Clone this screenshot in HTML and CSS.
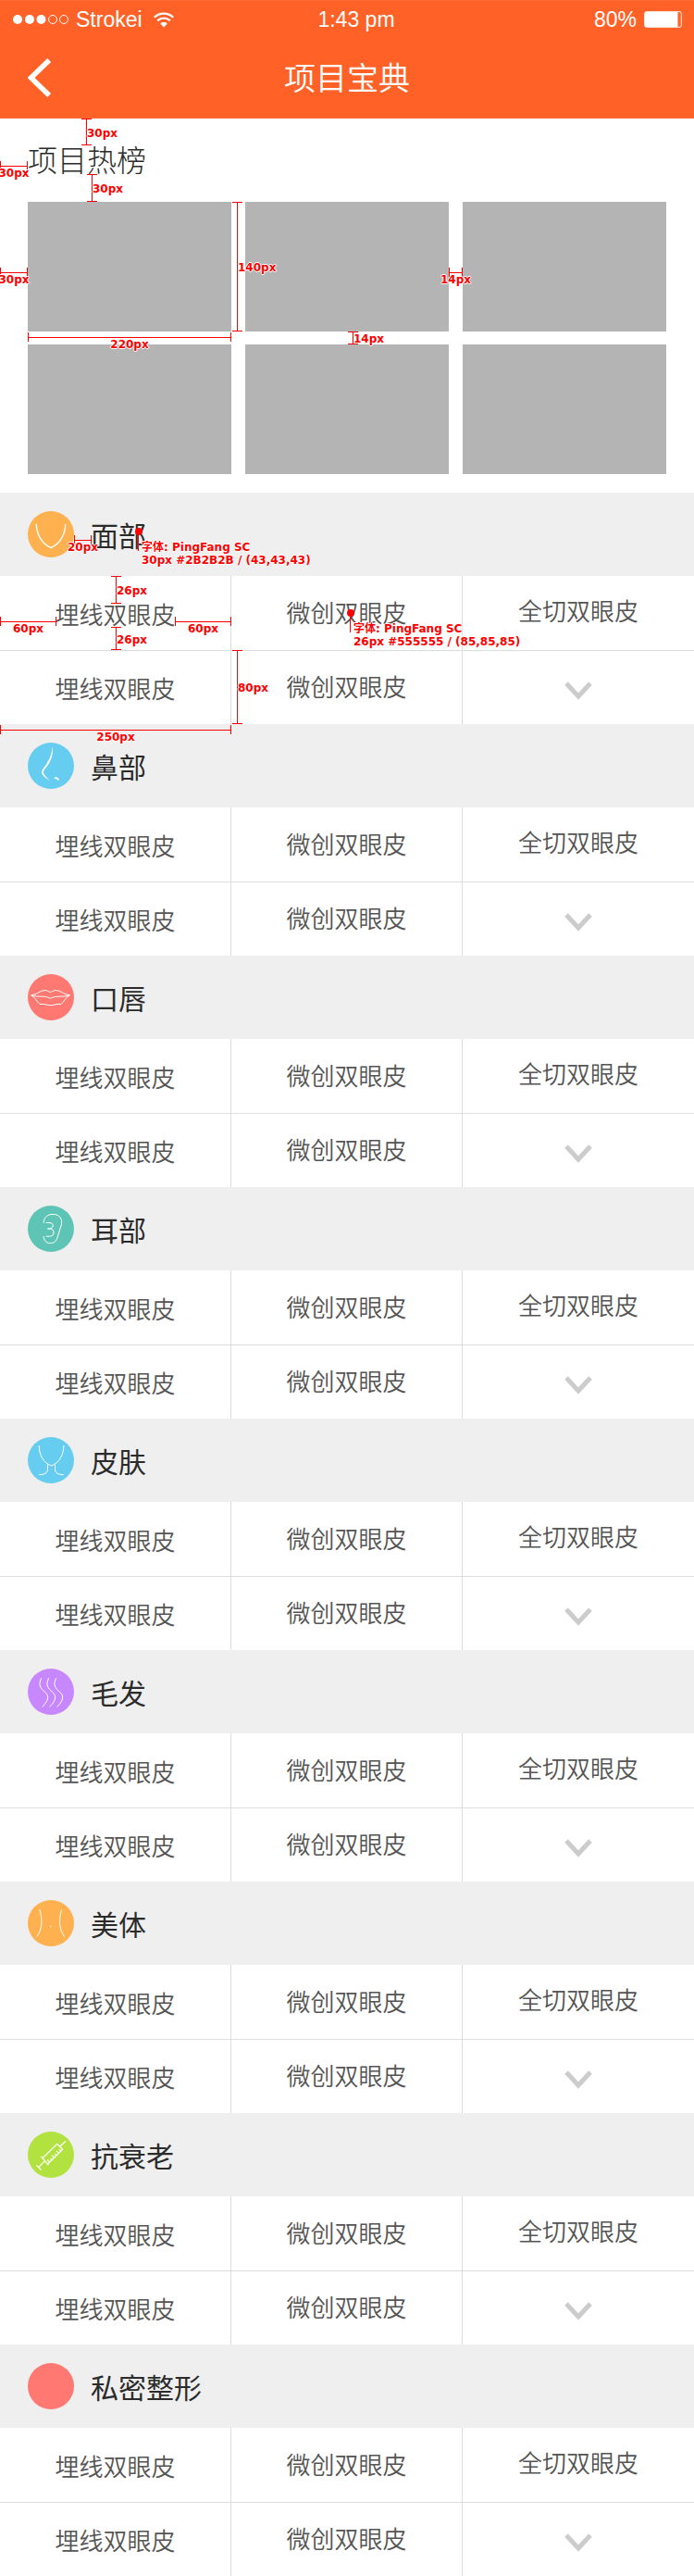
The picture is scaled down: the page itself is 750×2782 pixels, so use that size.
FILE: index.html
```html
<!DOCTYPE html>
<html lang="zh-CN">
<head>
<meta charset="utf-8">
<meta name="viewport" content="width=device-width, initial-scale=1">
<title>项目宝典</title>
<link rel="stylesheet" href="styles.css">
</head>
<body>
<header class="top">
  <div class="status">
    <div class="carrier">
      <svg class="signal" width="60" height="12" viewBox="0 0 60 12" aria-hidden="true"><g fill="#fff"><circle cx="5" cy="6" r="5"/><circle cx="18" cy="6" r="5"/><circle cx="30.500" cy="6" r="5"/></g><g fill="none" stroke="#fff"><circle cx="43" cy="6" r="4.500"/><circle cx="55" cy="6" r="4.500"/></g></svg>
      <span>Strokei</span>
      <svg class="wifi" width="22" height="17" viewBox="0 0 22 17" aria-hidden="true"><g fill="none" stroke="#fff" stroke-width="2.200"><path d="M.8 5.800C6.500.3 15.500.3 21.200 5.800"/><path d="M4.200 9.400C8 5.700 14 5.700 17.800 9.400"/></g><path d="M7.200 12.400C9.200 10.500 12.800 10.500 14.800 12.400L11 16.500Z" fill="#fff"/></svg>
    </div>
    <span class="clock">1:43 pm</span>
    <div class="power">
      <span>80%</span>
      <svg width="42" height="18" viewBox="0 0 42 18" aria-hidden="true"><rect x=".7" y=".7" width="39.600" height="16.600" rx="2" fill="none" stroke="#fff"/><rect x="1" y="1" width="35.500" height="16" rx="1" fill="#fff"/></svg>
    </div>
  </div>
  <div class="nav">
    <button class="back" type="button" aria-label="返回"><svg width="26" height="42" viewBox="0 0 26 42" aria-hidden="true"><path d="M23.200 2L3.500 21L23.200 40" fill="none" stroke="#fff" stroke-width="5.600"/></svg></button>
    <h1 class="title">项目宝典</h1>
  </div>
</header>
<main>
  <section class="hot">
    <h2 class="hot-title">项目热榜</h2>
    <div class="thumbs">
      <a class="thumb" href="#" aria-label="项目 1"></a><a class="thumb" href="#" aria-label="项目 2"></a><a class="thumb" href="#" aria-label="项目 3"></a>
      <a class="thumb" href="#" aria-label="项目 4"></a><a class="thumb" href="#" aria-label="项目 5"></a><a class="thumb" href="#" aria-label="项目 6"></a>
    </div>
    <span class="dim dim-v title-above"><b>30px</b></span>
    <span class="dim dim-h title-left"><b>30px</b></span>
    <span class="dim dim-v title-below"><b>30px</b></span>
    <span class="dim dim-h thumb-left"><b>30px</b></span>
    <span class="dim dim-v thumb-height"><b>140px</b></span>
    <span class="dim dim-h thumb-width"><b>220px</b></span>
    <span class="dim dim-v thumb-row"><b>14px</b></span>
    <span class="dim dim-h thumb-col"><b>14px</b></span>
  </section>

  <section class="group">
    <h2 class="group-head"><svg class="icon orange" viewBox="0 0 50 50" aria-hidden="true"><path stroke-width="1.400" d="M9.300 14C9.500 26 16 36 25 39.500C34 36 40.500 26 40.700 14"/></svg>面部</h2>
    <div class="items"><a href="#">埋线双眼皮</a><a href="#">微创双眼皮</a><a href="#">全切双眼皮</a><a href="#">埋线双眼皮</a><a href="#">微创双眼皮</a><button type="button" aria-label="展开"><svg class="chevron" viewBox="0 0 30 20" aria-hidden="true"><path d="M2 2L15 16L28 2"/></svg></button></div>
    <span class="dim dim-h icon-gap"><b>20px</b></span>
    <span class="dim dim-v item-above"><b>26px</b></span>
    <span class="dim dim-h item-left"><b>60px</b></span>
    <span class="dim dim-h item-right"><b>60px</b></span>
    <span class="dim dim-v item-below"><b>26px</b></span>
    <span class="dim dim-v item-height"><b>80px</b></span>
    <span class="dim dim-h item-width"><b>250px</b></span>
    <span class="note head-font">字体: PingFang SC<br>30px #2B2B2B / (43,43,43)</span>
    <span class="note item-font">字体: PingFang SC<br>26px #555555 / (85,85,85)</span>
  </section>

  <section class="group">
    <h2 class="group-head"><svg class="icon blue" viewBox="0 0 50 50" aria-hidden="true"><path fill="#fff" stroke="none" d="M26.400 4C27.800 11 26 18 22 24C19 28 16.500 30 17 33C18.500 36 21 38 24 41C20 39 16.500 36 15 33C14.500 30 17.500 27 20 23.500C24 17 26.200 12 26.400 4Z"/><path fill="#fff" stroke="none" d="M28 38.500C30 36.500 33.500 37 34 41C32 40.500 31 38.500 28 38.500Z"/></svg>鼻部</h2>
    <div class="items"><a href="#">埋线双眼皮</a><a href="#">微创双眼皮</a><a href="#">全切双眼皮</a><a href="#">埋线双眼皮</a><a href="#">微创双眼皮</a><button type="button" aria-label="展开"><svg class="chevron" viewBox="0 0 30 20" aria-hidden="true"><path d="M2 2L15 16L28 2"/></svg></button></div>
  </section>

  <section class="group">
    <h2 class="group-head"><svg class="icon red" viewBox="0 0 50 50" aria-hidden="true"><path d="M3.500 22.700C10 22.500 13 17.500 18.500 17.500C21 17.300 23 19.500 24.500 19.500C26 19.500 28 17.300 30.500 17.500C36 17.500 39 22.500 45.500 22.700C41 25 39 30 36 32.500C32 31.500 28 34 24.500 33.600C21 34 17 31.500 13 32.500C10 30 8 25 3.500 22.700Z"/><path d="M4 23C12 25.500 18 22.500 24.500 26.300C31 22.500 37 25.500 45 23"/></svg>口唇</h2>
    <div class="items"><a href="#">埋线双眼皮</a><a href="#">微创双眼皮</a><a href="#">全切双眼皮</a><a href="#">埋线双眼皮</a><a href="#">微创双眼皮</a><button type="button" aria-label="展开"><svg class="chevron" viewBox="0 0 30 20" aria-hidden="true"><path d="M2 2L15 16L28 2"/></svg></button></div>
  </section>

  <section class="group">
    <h2 class="group-head"><svg class="icon teal" viewBox="0 0 50 50" aria-hidden="true"><path d="M17.300 18.700C17 12.500 21.500 9.400 27 9.400C34 9.400 37.500 14 36.500 20L32.500 33C31 39 28 40.600 24.500 40.600C19.500 40.600 17 37 17.200 33"/><path d="M19.700 18.500H23C26 18.500 27.500 20 27.300 22C27 24.500 24 25 21.500 25H24C27 25 28 27 28 29C28 32 26 33.200 23.500 33.200H19.700"/></svg>耳部</h2>
    <div class="items"><a href="#">埋线双眼皮</a><a href="#">微创双眼皮</a><a href="#">全切双眼皮</a><a href="#">埋线双眼皮</a><a href="#">微创双眼皮</a><button type="button" aria-label="展开"><svg class="chevron" viewBox="0 0 30 20" aria-hidden="true"><path d="M2 2L15 16L28 2"/></svg></button></div>
  </section>

  <section class="group">
    <h2 class="group-head"><svg class="icon blue" viewBox="0 0 50 50" aria-hidden="true"><path d="M12.200 9C12 19 17 28 25.500 31C34 28 39 19 38.800 9"/><path d="M21.500 29.500V34.500C21.500 39 18 40.500 12.200 40.700M29.500 29.500V34.500C29.500 39 33 40.500 38.800 40.700"/></svg>皮肤</h2>
    <div class="items"><a href="#">埋线双眼皮</a><a href="#">微创双眼皮</a><a href="#">全切双眼皮</a><a href="#">埋线双眼皮</a><a href="#">微创双眼皮</a><button type="button" aria-label="展开"><svg class="chevron" viewBox="0 0 30 20" aria-hidden="true"><path d="M2 2L15 16L28 2"/></svg></button></div>
  </section>

  <section class="group">
    <h2 class="group-head"><svg class="icon purple" viewBox="0 0 50 50" aria-hidden="true"><path d="M14.500 10.300C9 23 20 23 21.700 30C22 34 19 38 15.700 41.300M22.500 10.300C17 23 28 23 29.700 30C30 34 27 38 23.700 41.300M30.500 10.300C25 23 36 23 37.700 30C38 34 35 38 31.700 41.300"/></svg>毛发</h2>
    <div class="items"><a href="#">埋线双眼皮</a><a href="#">微创双眼皮</a><a href="#">全切双眼皮</a><a href="#">埋线双眼皮</a><a href="#">微创双眼皮</a><button type="button" aria-label="展开"><svg class="chevron" viewBox="0 0 30 20" aria-hidden="true"><path d="M2 2L15 16L28 2"/></svg></button></div>
  </section>

  <section class="group">
    <h2 class="group-head"><svg class="icon orange" viewBox="0 0 50 50" aria-hidden="true"><path d="M12.800 10.300C16 21 16 31 9.700 39.700M36.600 10.300C33.400 21 33.400 31 39.700 39.700"/><circle cx="24.600" cy="28.300" r=".8" fill="#fff" stroke="none"/></svg>美体</h2>
    <div class="items"><a href="#">埋线双眼皮</a><a href="#">微创双眼皮</a><a href="#">全切双眼皮</a><a href="#">埋线双眼皮</a><a href="#">微创双眼皮</a><button type="button" aria-label="展开"><svg class="chevron" viewBox="0 0 30 20" aria-hidden="true"><path d="M2 2L15 16L28 2"/></svg></button></div>
  </section>

  <section class="group">
    <h2 class="group-head"><svg class="icon green" viewBox="0 0 50 50" aria-hidden="true"><path stroke-width="1.200" d="M41 10.300L34.700 16.300M16.300 28.500L31.700 13.300L37.700 19.300L21.700 35M14.500 26.800L22.300 36.300M18.500 31.800L11.800 38.500M9.300 36.300L14.500 41.500M23.500 33L21 30.500M26 30.800L24.300 29M28.500 28.200L26 25.700M31 25.800L29.300 24M33.500 23.300L31 20.800M35.800 21L34 19.300"/></svg>抗衰老</h2>
    <div class="items"><a href="#">埋线双眼皮</a><a href="#">微创双眼皮</a><a href="#">全切双眼皮</a><a href="#">埋线双眼皮</a><a href="#">微创双眼皮</a><button type="button" aria-label="展开"><svg class="chevron" viewBox="0 0 30 20" aria-hidden="true"><path d="M2 2L15 16L28 2"/></svg></button></div>
  </section>

  <section class="group">
    <h2 class="group-head"><svg class="icon red" viewBox="0 0 50 50" aria-hidden="true"></svg>私密整形</h2>
    <div class="items"><a href="#">埋线双眼皮</a><a href="#">微创双眼皮</a><a href="#">全切双眼皮</a><a href="#">埋线双眼皮</a><a href="#">微创双眼皮</a><button type="button" aria-label="展开"><svg class="chevron" viewBox="0 0 30 20" aria-hidden="true"><path d="M2 2L15 16L28 2"/></svg></button></div>
  </section>
</main>
</body>
</html>
```
FILE: styles.css
```css
* { box-sizing: border-box; }
body {
  margin: 0;
  background: #fff;
  color: #2b2b2b;
  font-family: "Noto Sans CJK SC", sans-serif;
  font-weight: 350;
}
h1, h2 { margin: 0; font-weight: 350; }
a { color: inherit; text-decoration: none; }
button { border: 0; padding: 0; background: none; font: inherit; cursor: pointer; }
svg { display: block; }

/* Header */
.top {
  background: #ff6127;
  color: #fff;
  box-shadow: inset 0 1px #ff6c38, inset 0 -1px #ff6c38;
}
.status {
  display: grid;
  grid-template-columns: 1fr auto 1fr;
  align-items: center;
  height: 40px;
  padding: 2px 12px 0 14px;
  font: 23px/26px "Liberation Sans", Arial, sans-serif;
}
.carrier, .power { display: flex; align-items: center; }
.carrier { gap: 8px; }
.wifi { margin-left: 4px; }
.clock { padding-left: 18px; }
.power { justify-content: flex-end; gap: 8px; }
.nav {
  display: grid;
  grid-template-columns: 60px 1fr 60px;
  align-items: center;
  height: 88px;
  padding: 0 30px;
}
.title { padding-bottom: 2px; font-size: 34px; line-height: 48px; text-align: center; }

/* Hot list */
.hot { position: relative; padding: 0 30px 20px; }
.hot-title { height: 90px; font-size: 32px; font-weight: 300; line-height: 86px; }
.thumbs { display: grid; grid-template-columns: repeat(3, 1fr); gap: 14px 15px; }
.thumb { height: 140px; background: #b4b4b4; }

/* Groups */
.group { position: relative; }
.group-head {
  display: flex;
  align-items: center;
  gap: 18px;
  height: 90px;
  padding: 0 30px;
  background: #efefef;
  font-size: 30px;
  font-weight: 400;
  line-height: 44px;
}
.icon {
  width: 50px;
  height: 50px;
  border-radius: 50%;
  fill: none;
  stroke: #fff;
  stroke-width: 1;
}
.orange { background: #ffb04f; }
.blue { background: #66cdf0; }
.red { background: #ff7872; }
.teal { background: #5ec5b6; }
.purple { background: #c788ff; }
.green { background: #b2e23f; }

.items { display: grid; grid-template-columns: repeat(3, 1fr); grid-auto-rows: 80px; }
.items > * {
  display: flex;
  align-items: center;
  justify-content: center;
  border-right: 1px solid #ddd;
  color: #555;
  font-size: 26px;
  line-height: 38px;
}
.items > :nth-child(3n) { border-right: 0; padding-bottom: 6px; }
.items > :nth-child(3n + 1) { padding-top: 2px; }
.items > :nth-child(3n + 2) { padding-bottom: 2px; }
.items > :nth-child(n + 4) { box-shadow: inset 0 1px #ddd; }
.items > :last-child { padding: 8px 0 0; }
.chevron { width: 30px; height: 20px; fill: none; stroke: #ccc; stroke-width: 5; }

/* Dimension marks laid over the layout */
.dim, .note {
  position: absolute;
  color: #f00;
  font: bold 12px/14px "DejaVu Sans", "Noto Sans CJK SC", sans-serif;
  white-space: nowrap;
  text-shadow: 1px 0 #fff, -1px 0 #fff, 0 1px #fff, 0 -1px #fff;
}
.dim b { position: absolute; }
.dim-h {
  height: 10px;
  border: solid #f00;
  border-width: 0 1px;
  background: linear-gradient(#f00, #f00) 0 5px / 100% 1px no-repeat;
}
.dim-h b { top: 6px; left: 50%; transform: translateX(-50%); }
.dim-v {
  width: 11px;
  border: solid #f00;
  border-width: 1px 0;
  background: linear-gradient(#f00, #f00) 5px 0 / 1px 100% no-repeat;
}
.dim-v b { left: 6px; top: 50%; margin-top: -6px; }

.title-above { left: 88px; top: 0; height: 29px; }
.title-left { left: 0; top: 46px; width: 30px; }
.title-below { left: 94px; top: 60px; height: 30px; }
.thumb-left { left: 0; top: 161px; width: 30px; }
.thumb-height { left: 251px; top: 90px; height: 140px; }
.thumb-width { left: 30px; top: 231px; width: 220px; }
.thumb-row { left: 376px; top: 230px; height: 14px; }
.thumb-col { left: 485px; top: 161px; width: 15px; }

.icon-gap { left: 80px; top: 46px; width: 19px; }
.item-above { left: 120px; top: 90px; height: 30px; }
.item-left { left: 0; top: 134px; width: 61px; }
.item-right { left: 189px; top: 134px; width: 61px; }
.item-below { left: 120px; top: 145px; height: 25px; }
.item-height { left: 251px; top: 170px; height: 80px; }
.item-width { left: 0; top: 251px; width: 250px; z-index: 1; }

.note::before {
  content: "";
  position: absolute;
  left: -7px;
  top: -14px;
  width: 8px;
  height: 8px;
  border-radius: 50%;
  background: #f00;
}
.note::after {
  content: "";
  position: absolute;
  left: -4px;
  top: -10px;
  width: 1px;
  height: 21px;
  background: #f00;
}
.head-font { left: 153px; top: 52px; }
.item-font { left: 382px; top: 140px; }
```
